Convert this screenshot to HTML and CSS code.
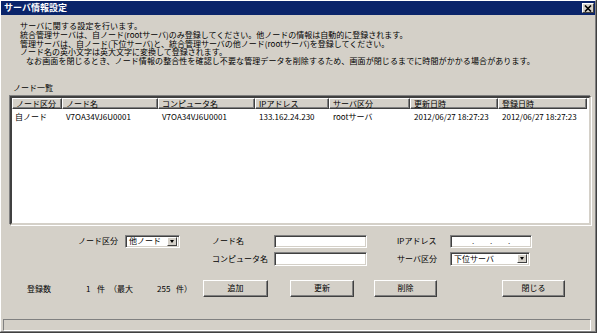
FILE: index.html
```html
<!DOCTYPE html>
<html lang="ja">
<head>
    <meta charset="UTF-8">
    <title>サーバ情報設定</title>
    <link rel="stylesheet" href="styles.css">
</head>
<body>
    <div class="window">
        <div class="frame">
            <div class="titlebar">
                <span class="title">サーバ情報設定</span>
                <div class="closer">
                    <svg width="8" height="7" viewBox="0 0 8 7">
                        <path d="M1 0.5 L7 6.5 M7 0.5 L1 6.5" stroke="#000" stroke-width="1.6" fill="none"/>
                    </svg>
                </div>
            </div>
            <div class="content">
                <div class="notes">
                    <p class="n1">サーバに関する設定を行います。</p>
                    <p>統合管理サーバは、自ノード(rootサーバ)のみ登録してください。他ノードの情報は自動的に登録されます。</p>
                    <p>管理サーバは、自ノード(下位サーバ)と、統合管理サーバの他ノード(rootサーバ)を登録してください。</p>
                    <p>ノード名の英小文字は英大文字に変換して登録されます。</p>
                    <p class="n5">なお画面を閉じるとき、ノード情報の整合性を確認し不要な管理データを削除するため、画面が閉じるまでに時間がかかる場合があります。</p>
                </div>
                <div class="list-label">ノード一覧</div>
                <div class="listbox">
                    <div class="cols head">
                        <div>ノード区分</div>
                        <div>ノード名</div>
                        <div>コンピュータ名</div>
                        <div>IPアドレス</div>
                        <div>サーバ区分</div>
                        <div>更新日時</div>
                        <div>登録日時</div>
                    </div>
                    <div class="cols row">
                        <div>自ノード</div>
                        <div>V7OA34VJ6U0001</div>
                        <div>V7OA34VJ6U0001</div>
                        <div>133.162.24.230</div>
                        <div>rootサーバ</div>
                        <div>2012/06/27 18:27:23</div>
                        <div>2012/06/27 18:27:23</div>
                    </div>
                </div>
                <div class="form">
                    <label class="lbl right c-kind">ノード区分</label>
                    <div class="select kind c-kind-field">
                        <span>他ノード</span>
                        <span class="arrow"></span>
                    </div>
                    <label class="lbl c-mid">ノード名</label>
                    <div class="input c-mid-field"></div>
                    <label class="lbl c-side">IPアドレス</label>
                    <div class="input ip c-side-field"><span>.</span><span>.</span><span>.</span></div>

                    <label class="lbl c-mid">コンピュータ名</label>
                    <div class="input tall c-mid-field"></div>
                    <label class="lbl c-side">サーバ区分</label>
                    <div class="select level c-side-field">
                        <span>下位サーバ</span>
                        <span class="arrow"></span>
                    </div>
                </div>
                <div class="actions">
                    <span class="count-label">登録数</span>
                    <span class="num-1">1</span>
                    <span class="unit-1">件</span>
                    <span class="max-label">（最大</span>
                    <span class="num-2">255</span>
                    <span class="unit-2">件）</span>
                    <button class="btn add">追加</button>
                    <button class="btn update">更新</button>
                    <button class="btn remove">削除</button>
                    <button class="btn close">閉じる</button>
                </div>
            </div>
            <div class="statusbar"></div>
        </div>
    </div>
</body>
</html>
```

FILE: styles.css
```css
body {
    margin: 0;
    background: #d4d0c8;
    font-family: "Noto Sans CJK JP", "Liberation Sans", sans-serif;
    font-size: 8px;
    color: #000;
}
.window {
    width: 597px;
    height: 333px;
    box-sizing: border-box;
    border-right: 1px solid #404040;
    border-bottom: 1px solid #404040;
}
.frame {
    height: 100%;
    box-sizing: border-box;
    border: 1px solid;
    border-color: #fff #808080 #808080 #fff;
    display: flex;
    flex-direction: column;
}
.titlebar {
    height: 14px;
    background: #0a246a;
    display: flex;
    align-items: center;
    justify-content: space-between;
}
.title {
    color: #fff;
    font-weight: bold;
    font-size: 9px;
    padding-left: 3px;
    line-height: 14px;
}
.closer {
    width: 12px;
    height: 10px;
    box-sizing: border-box;
    margin-right: 1px;
    background: #d4d0c8;
    border: 1px solid;
    border-color: #fff #404040 #404040 #fff;
    display: flex;
    align-items: center;
    justify-content: center;
}
.content {
    flex: 1;
}
.notes {
    margin-top: 7px;
    padding-left: 19px;
}
.notes p {
    margin: 0;
    line-height: 8.75px;
    white-space: nowrap;
}
.notes .n1 {
    letter-spacing: 0.2px;
}
.notes .n5 {
    padding-left: 6px;
    letter-spacing: 0.1px;
}
.list-label {
    margin: 17px 0 0 12px;
    line-height: 10px;
}
.listbox {
    margin: 3px 0 0 9px;
    width: 581px;
    height: 129px;
    box-sizing: border-box;
    background: #fff;
    border: 2px solid;
    border-color: #404040 #d4d0c8 #d4d0c8 #404040;
    box-shadow: -1px -1px 0 #808080, 1px 1px 0 #fff;
}
.cols {
    display: grid;
    grid-template-columns: 50px 96px 97px 74px 81px 88px 89px;
    white-space: nowrap;
}
.head div {
    height: 11px;
    box-sizing: border-box;
    background: #d4d0c8;
    border: 1px solid;
    border-color: #fff #404040 #404040 #fff;
    box-shadow: inset -1px -1px 0 #808080;
    padding-left: 3px;
    line-height: 9px;
    overflow: hidden;
}
.row {
    margin-top: 3px;
}
.row div {
    line-height: 10px;
    padding-left: 4px;
}
.row div:first-child {
    padding-left: 3px;
}

/* form: label | gap | field | gap | label | field | gap | label | field */
.form {
    margin: 10px 0 0 59px;
    display: grid;
    grid-template-columns: 58px 7px 55px 32px 62px 93px 30px 53px 82px;
    grid-template-rows: 13px 14px;
    row-gap: 4px;
    align-items: center;
}
.c-kind { grid-column: 1; }
.c-kind-field { grid-column: 3; }
.c-mid { grid-column: 5; }
.c-mid-field { grid-column: 6; }
.c-side { grid-column: 8; }
.c-side-field { grid-column: 9; }
.lbl {
    white-space: nowrap;
    line-height: 10px;
}
.lbl.right {
    text-align: right;
}
.input,
.select {
    height: 13px;
    box-sizing: border-box;
    background: #fff;
    border: 1px solid;
    border-color: #808080 #fff #fff #808080;
    box-shadow: inset 1px 1px 0 #404040, inset -1px -1px 0 #d4d0c8;
}
.input.tall,
.select.level {
    height: 14px;
}
.select {
    display: flex;
    align-items: center;
    justify-content: space-between;
    padding: 0 2px 0 3px;
    white-space: nowrap;
    line-height: 10px;
}
.select.kind {
    width: 55px;
}
.select.level {
    width: 80px;
}
.arrow {
    width: 10px;
    height: 9px;
    box-sizing: border-box;
    background: #d4d0c8;
    border: 1px solid;
    border-color: #fff #404040 #404040 #fff;
    position: relative;
}
.arrow::after {
    content: "";
    position: absolute;
    left: 2px;
    top: 2px;
    border-left: 2px solid transparent;
    border-right: 2px solid transparent;
    border-top: 3px solid #000;
}
.input.ip {
    display: flex;
    gap: 15px;
    padding-left: 21px;
    line-height: 10px;
    color: #404040;
}
.input.ip span {
    width: 3px;
}
.actions {
    margin-top: 14px;
    height: 17px;
    display: flex;
    align-items: center;
    white-space: nowrap;
}
.count-label {
    margin-left: 26px;
    width: 59px;
}
.num-1 {
    width: 11px;
}
.unit-1 {
    width: 12px;
}
.max-label {
    width: 48px;
}
.num-2 {
    width: 19px;
}
.unit-2 {
    width: 27px;
}
.btn {
    height: 17px;
    box-sizing: border-box;
    padding: 0;
    font-family: inherit;
    font-size: 8px;
    color: #000;
    background: #d4d0c8;
    border: 1px solid;
    border-color: #fff #404040 #404040 #fff;
    box-shadow: inset -1px -1px 0 #808080;
    line-height: 14px;
    text-align: center;
}
.btn.add {
    width: 65px;
}
.btn.update {
    width: 64px;
    margin-left: 22px;
}
.btn.remove {
    width: 63px;
    margin-left: 20px;
}
.btn.close {
    width: 63px;
    margin-left: 65px;
}
.statusbar {
    height: 12px;
    margin: 0 4px 0 2px;
    box-sizing: border-box;
    border: 1px solid;
    border-color: #808080 #fff #fff #808080;
}
```
